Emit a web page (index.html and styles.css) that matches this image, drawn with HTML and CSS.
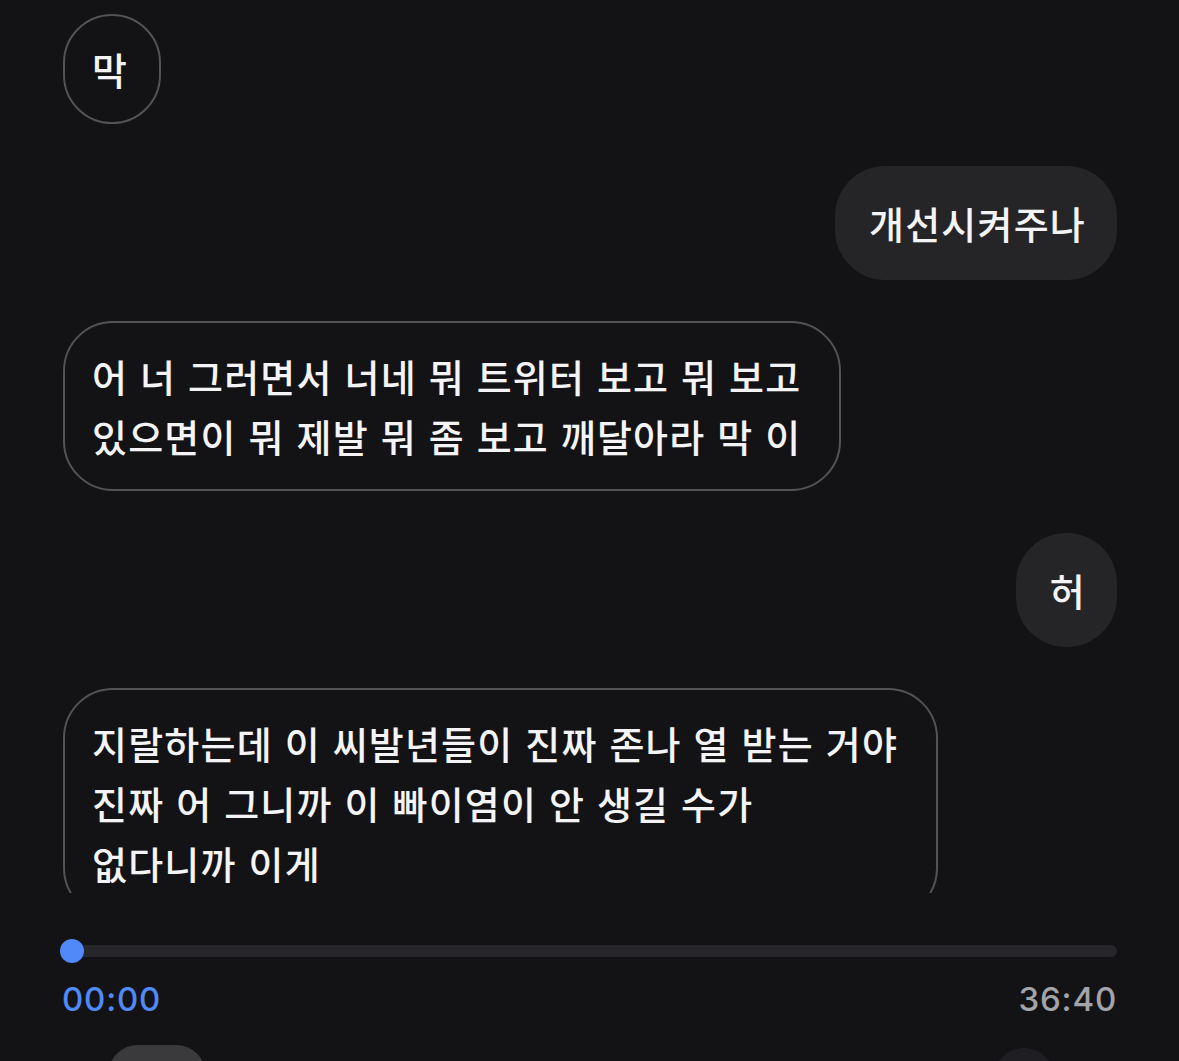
FILE: index.html
```html
<!DOCTYPE html>
<html lang="ko">
<head>
<meta charset="utf-8">
<title>Transcript</title>
<link rel="stylesheet" href="styles.css">
</head>
<body>
<div class="screen">
  <div class="chat">
    <div class="msg left"><div class="bubble outline">막</div></div>
    <div class="msg right"><div class="bubble filled">개선시켜주나</div></div>
    <div class="msg left"><div class="bubble outline multi">어 너 그러면서 너네 뭐 트위터 보고 뭐 보고<br>있으면이 뭐 제발 뭐 좀 보고 깨달아라 막 이</div></div>
    <div class="msg right"><div class="bubble filled">허</div></div>
    <div class="msg left"><div class="bubble outline multi">지랄하는데 이 씨발년들이 진짜 존나 열 받는 거야<br>진짜 어 그니까 이 빠이염이 안 생길 수가<br>없다니까 이게</div></div>
  </div>
  <div class="player">
    <div class="track"><div class="thumb"></div></div>
    <div class="times"><span class="cur">00:00</span><span class="total">36:40</span></div>
    <div class="controls">
      <div class="btn-speed"></div>
      <div class="btn-round"></div>
    </div>
  </div>
</div>
</body>
</html>
```
FILE: styles.css
```css
* { box-sizing: border-box; }
html, body {
  margin: 0;
  padding: 0;
  background: #131315;
  overflow: hidden;
}
.screen {
  width: 1179px;
  height: 1061px;
  overflow: hidden;
  font-family: "Noto Sans CJK KR", "Noto Sans", sans-serif;
  color: #f4f4f6;
}
.chat {
  height: 893px;
  overflow: hidden;
  padding: 14px 62px 0 63px;
  display: flex;
  flex-direction: column;
  gap: 41.5px;
}
.msg { display: flex; }
.msg.left { justify-content: flex-start; }
.msg.right { justify-content: flex-end; }
.bubble {
  font-size: 38px;
  font-weight: 500;
  line-height: 60px;
  letter-spacing: 1.2px;
  padding: 23px 31px 23px 27px;
  border-radius: 50px;
  white-space: nowrap;
}
.bubble.outline {
  border: 2px solid #525257;
}
.bubble.outline.multi {
  padding-right: 38px;
}
.bubble.filled {
  background: #252528;
  padding: 27px 31px 27px 34px;
}
.player {
  padding: 52px 62px 0 62px;
}
.track {
  position: relative;
  height: 12px;
  border-radius: 6px;
  background: #27272b;
}
.thumb {
  position: absolute;
  left: -2px;
  top: -6px;
  width: 24px;
  height: 24px;
  border-radius: 50%;
  background: #5189f8;
}
.times {
  display: flex;
  justify-content: space-between;
  margin-top: 22px;
  font-family: "Inter", "Liberation Sans", sans-serif;
  font-size: 33px;
  font-weight: 500;
  line-height: 40px;
  letter-spacing: 0.8px;
}
.cur { color: #5189f8; }
.total { color: #a3a3aa; }
.controls {
  display: flex;
  justify-content: space-between;
  margin-top: 26px;
  padding: 0 62px 0 46px;
}
.btn-speed {
  width: 98px;
  height: 60px;
  border-radius: 30px;
  background: #3a3a3d;
}
.btn-round {
  width: 62px;
  height: 62px;
  border-radius: 50%;
  background: #1e1e23;
  margin-top: 3px;
}
```
